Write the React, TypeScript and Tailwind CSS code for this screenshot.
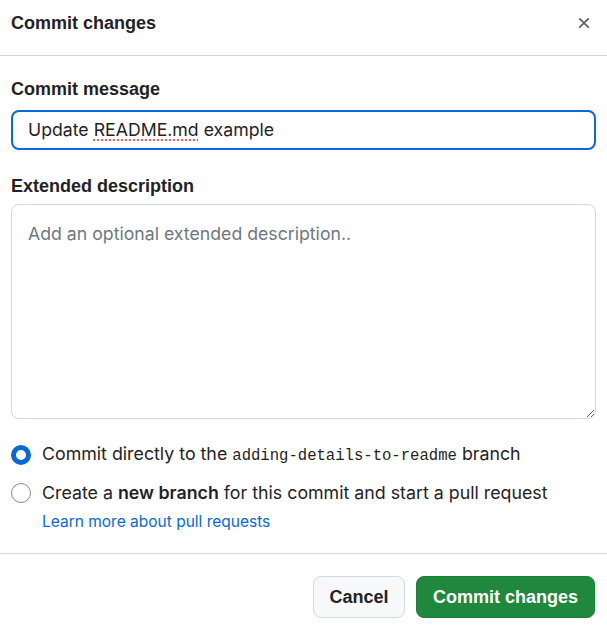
export default function App() {
  return (
    <div className="w-[607px] h-[630px] bg-white text-[#1f2328] font-['Liberation_Sans',Arial,sans-serif] overflow-hidden">
      <div className="h-[56px] flex items-center justify-between pl-[11px] pr-[14px] border-b border-[#d1d9e0]">
        <h1 className="text-[18px] font-semibold -mt-[9px]">Commit changes</h1>
        <svg className="-mt-[9px]" width="18" height="18" viewBox="0 0 16 16" fill="#59636e">
          <path d="M3.72 3.72a.75.75 0 0 1 1.06 0L8 6.94l3.22-3.22a.749.749 0 0 1 1.275.326.749.749 0 0 1-.215.734L9.06 8l3.22 3.22a.749.749 0 0 1-.326 1.275.749.749 0 0 1-.734-.215L8 9.06l-3.22 3.22a.751.751 0 0 1-1.042-.018.751.751 0 0 1-.018-1.042L6.94 8 3.72 4.78a.75.75 0 0 1 0-1.06Z" />
        </svg>
      </div>

      <div className="px-[11px]">
        <label className="block mt-[22px] text-[18px] font-semibold leading-[22px]">Commit message</label>
        <div className="mt-[10px] h-[40px] rounded-[8px] border-2 border-[#0969da] flex items-center px-[15px] text-[17.7px] font-['Inter',sans-serif]">
          <span>
            Update{" "}
            <span className="underline decoration-dotted decoration-[#e5534b] underline-offset-[4px]">README.md</span>{" "}
            example
          </span>
        </div>

        <label className="block mt-[25px] text-[18px] font-semibold leading-[22px]">Extended description</label>
        <textarea
          className="mt-[7px] block w-full h-[215px] rounded-[8px] border border-[#d1d9e0] px-[16px] py-[16px] text-[17.7px] font-['Inter',sans-serif] placeholder:text-[#6e7781] outline-none"
          placeholder="Add an optional extended description.."
        />

        <div className="mt-[25px] flex items-center gap-[11px] h-[22px] text-[17.8px] font-['Inter',sans-serif]">
          <span className="w-[20px] h-[20px] rounded-full border-[5px] border-[#0969da] bg-white shrink-0" />
          <span>
            Commit directly to the{" "}
            <span className="font-['Liberation_Mono',monospace] text-[15.6px]">adding-details-to-readme</span> branch
          </span>
        </div>
        <div className="mt-[16px] flex items-center gap-[11px] h-[22px] text-[17.8px] font-['Inter',sans-serif]">
          <span className="w-[20px] h-[20px] rounded-full border border-[#818b98] bg-white shrink-0" />
          <span>
            Create a <b className="font-semibold">new branch</b> for this commit and start a pull request
          </span>
        </div>
        <a className="block ml-[31px] mt-[6px] text-[15.5px] text-[#0969da] font-['Inter',sans-serif]">Learn more about pull requests</a>
      </div>

      <div className="mt-[20px] border-t border-[#d1d9e0] flex justify-end gap-[11px] px-[12px] pt-[22px]">
        <button className="h-[42px] w-[92px] rounded-[8px] bg-[#f6f8fa] border border-[#d1d9e0] text-[18px] font-semibold">Cancel</button>
        <button className="h-[42px] w-[179px] rounded-[8px] bg-[#1f883d] border border-[#1a7f37] text-white text-[18px] font-semibold">Commit changes</button>
      </div>
    </div>
  );
}
